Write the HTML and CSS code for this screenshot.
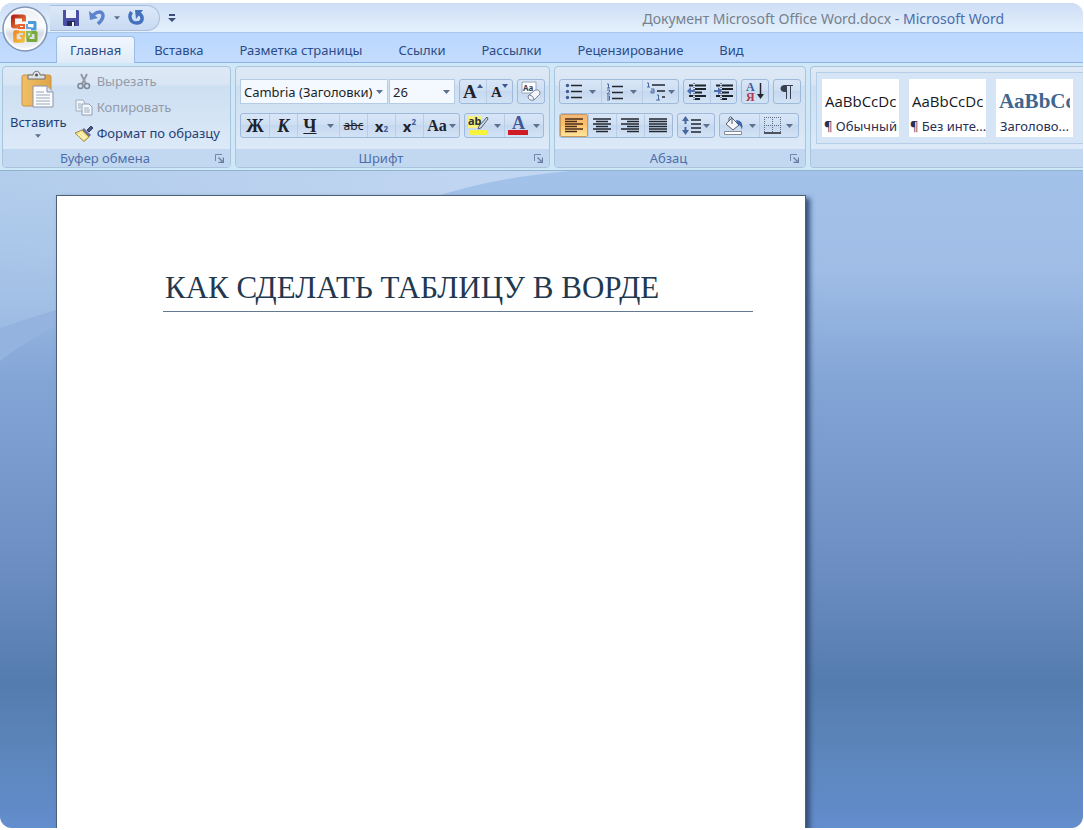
FILE: index.html
```html
<!DOCTYPE html>
<html lang="ru">
<head>
<meta charset="utf-8">
<title>Документ Microsoft Office Word.docx - Microsoft Word</title>
<link rel="stylesheet" href="styles.css">
</head>
<body>
<svg width="0" height="0" class="defs" aria-hidden="true">
  <defs>
    <linearGradient id="lgOrb" x1="0" y1="0" x2="0" y2="1"><stop offset="0" stop-color="#e9edf3"/><stop offset=".45" stop-color="#fdfdfe"/><stop offset=".6" stop-color="#d5dbe5"/><stop offset="1" stop-color="#f8fafc"/></linearGradient>
    <linearGradient id="lgRed" x1="0" y1="0" x2="1" y2="1"><stop offset="0" stop-color="#b3251a"/><stop offset="1" stop-color="#ee8a3a"/></linearGradient>
    <linearGradient id="lgYel" x1="0" y1="0" x2="1" y2="1"><stop offset="0" stop-color="#f08a24"/><stop offset="1" stop-color="#f4bf3a"/></linearGradient>
    <linearGradient id="lgClip" x1="0" y1="0" x2="1" y2="0"><stop offset="0" stop-color="#f0c068"/><stop offset="1" stop-color="#dfa545"/></linearGradient>
    <symbol id="arrow" viewBox="0 0 7 4"><path d="M0 0h7L3.500 4z" fill="#5d7090"/></symbol>
    <symbol id="launch" viewBox="0 0 9 9"><path d="M.5 7V.5H7" fill="none" stroke="#7088ab"/><path d="M3.500 8.500h5v-5M3.500 3.500l4 4" fill="none" stroke="#667d9f" stroke-width="1.300"/></symbol>
  </defs>
</svg>

<div class="window">
  <header class="titlebar">
    <div class="quick">
      <button aria-label="Сохранить"><svg width="18" height="18" viewBox="0 0 18 18"><path d="M1 1h15l1 1v15H2l-1-1z" fill="#4a4fa6"/><path d="M4 1h10v8H4z" fill="#edf2fb"/><path d="M5 12h8v5H5z" fill="#23285f"/><path d="M10 13h2v4h-2z" fill="#f4f6fc"/></svg></button>
      <button aria-label="Отменить"><svg width="17" height="17" viewBox="0 0 17 17"><path d="M4 6.500C7 2.500 14 1.500 14 6.500c0 4-2 5.500-5 8.500" fill="none" stroke="#5c83cb" stroke-width="3.500"/><path d="M0 2l1 9 8-2z" fill="#5c83cb"/></svg></button>
      <button class="tiny" aria-label="Список отмены"><svg width="6" height="4"><use href="#arrow"/></svg></button>
      <button aria-label="Повторить"><svg width="17" height="17" viewBox="0 0 17 17"><path d="M3.500 3C.5 7 2 14 8.500 14S16 7.500 11 4.500" fill="none" stroke="#4371bd" stroke-width="3.500"/><path d="M7 1h8l-7 9z" fill="#4371bd"/></svg></button>
    </div>
    <button class="customize" aria-label="Настройка панели быстрого доступа"><svg width="8" height="8" viewBox="0 0 8 8"><path d="M1 0h6v2H1zM0 4h8L4 8z" fill="#3c4f7a"/></svg></button>
    <h1 class="title"><span class="doc-name">Документ Microsoft Office Word.docx</span> - <span class="app-name">Microsoft Word</span></h1>
  </header>
  <button class="orb" aria-label="Кнопка Office">
    <svg width="46" height="46" viewBox="0 0 46 46">
      <circle cx="23" cy="23" r="22" fill="url(#lgOrb)" stroke="#8296b5" stroke-width="1.500"/>
      <circle cx="23" cy="23" r="20" fill="none" stroke="#fff" stroke-width="1.500" opacity=".8"/>
      <g fill="none" stroke-linejoin="round">
        <path d="M17 20.500h-5q-1 0-1-1v-8q0-1 1-1h9q1 0 1 1v4" stroke="url(#lgRed)" stroke-width="4"/>
        <path d="M26 16.500h7V23h-4" stroke="#4d9ada" stroke-width="3"/>
        <path d="M17 26h-4v9h8v-4" stroke="url(#lgYel)" stroke-width="3.500"/>
        <path d="M29 26.500h5v8h-8v-4" stroke="#79a93b" stroke-width="3"/>
      </g>
      <g fill="none" stroke-width="2"><path d="M17 22v-3h5v3z" stroke="#e8642c"/><path d="M25 18v4h4" stroke="#62a8e2"/><path d="M17 26h5v4h-4" stroke="#f3ae35"/><path d="M25 31v-5h4v4z" stroke="#8dbb52"/></g>
    </svg>
  </button>

  <nav class="tabs">
    <a href="#home" class="active" aria-current="page">Главная</a>
    <a href="#insert">Вставка</a>
    <a href="#layout">Разметка страницы</a>
    <a href="#refs">Ссылки</a>
    <a href="#mail">Рассылки</a>
    <a href="#review">Рецензирование</a>
    <a href="#view">Вид</a>
  </nav>

  <div class="ribbon" id="home">
    <section class="group">
      <div class="group-body clipboard">
        <button class="paste">
          <svg width="34" height="38" viewBox="0 0 34 38"><rect x="1" y="4" width="29" height="31" rx="2" fill="url(#lgClip)" stroke="#c59346"/><path d="M7 8V4h5c0-5 7-5 7 0h5v4z" fill="#dfe3e8" stroke="#70706f"/><circle cx="15.500" cy="4" r="1.500" fill="#555"/><path d="M12 15h14l6 6v15H12z" fill="#fbfcff" stroke="#8793a8"/><path d="M26 15v6h6" fill="#dbe3ef" stroke="#8793a8"/><path d="M15 21h8M15 24h14M15 27h14M15 30h14M15 33h14" stroke="#9ba6b8"/></svg>
          <span>Вставить</span>
          <svg width="6" height="4"><use href="#arrow"/></svg>
        </button>
        <div class="clip-list">
          <button disabled><svg width="18" height="17" viewBox="0 0 18 17"><path d="M6 1l5 10M12 1L7 11" stroke="#949ba6" stroke-width="2" fill="none"/><circle cx="5.500" cy="13" r="2.500" fill="none" stroke="#7f8793" stroke-width="1.500"/><circle cx="12" cy="13" r="2.500" fill="none" stroke="#7f8793" stroke-width="1.500"/></svg>Вырезать</button>
          <button disabled><svg width="18" height="17" viewBox="0 0 18 17"><path d="M1 1h7l2 3v8H1z" fill="#eef3fa" stroke="#a1adbf"/><path d="M7 5h7l3 3v8H7z" fill="#f4f7fc" stroke="#8f9db3"/><path d="M3 5h3M3 7h3M3 9h3M9 9h5M9 11h6M9 13h6" stroke="#9eabbf"/></svg>Копировать</button>
          <button><svg width="18" height="17" viewBox="0 0 18 17"><path d="M12 5l4-4 2 2-4 4z" fill="#4c5580" stroke="#3b4268"/><path d="M9 3l7 7-2 2-7-7z" fill="#6c70a0"/><path d="M7 5l7 7-5 4.500L0 8z" fill="#f2df84" stroke="#a08a3f"/><path d="M3 9l6 5M5 7l6 6" stroke="#fff8c8" stroke-width="1.500"/></svg>Формат по образцу</button>
        </div>
      </div>
      <footer class="caption"><span>Буфер обмена</span><button aria-label="Параметры буфера обмена"><svg width="9" height="9"><use href="#launch"/></svg></button></footer>
    </section>

    <section class="group">
      <div class="group-body">
        <div class="row">
          <div class="combos">
            <label class="combo wide"><select aria-label="Шрифт"><option>Cambria (Заголовки)</option></select><svg width="7" height="4"><use href="#arrow"/></svg></label>
            <label class="combo"><select aria-label="Размер шрифта"><option>26</option></select><svg width="7" height="4"><use href="#arrow"/></svg></label>
          </div>
          <div class="set">
            <button class="sm serif" aria-label="Увеличить размер"><span class="big">A</span><svg class="mark" width="6" height="4" viewBox="0 0 6 4"><path d="M0 4h6L3 0z" fill="#3b5990"/></svg></button>
            <button class="sm serif" aria-label="Уменьшить размер"><span>A</span><svg class="mark" width="6" height="4" viewBox="0 0 6 4"><path d="M0 0h6L3 4z" fill="#3b5990"/></svg></button>
          </div>
          <div class="set">
            <button class="sm" aria-label="Очистить формат"><svg width="20" height="21" viewBox="0 0 20 21"><path d="M1 1h14v11H1z" fill="#fff" stroke="#9aa6bb"/><text x="2" y="10" class="ico-text">Aa</text><path d="M7 15l7-6q5-1 5 4l-6 6q-6 1-6-4z" fill="#f3f5f9" stroke="#77849b"/><path d="M7 15q1-2 4 0 2 2 2 4" fill="none" stroke="#77849b"/></svg></button>
          </div>
        </div>
        <div class="row">
          <div class="set">
            <button class="md serif" aria-label="Полужирный"><b>Ж</b></button>
            <button class="md serif" aria-label="Курсив"><i>К</i></button>
            <button class="lg serif" aria-label="Подчеркнутый"><u>Ч</u><svg width="7" height="4"><use href="#arrow"/></svg></button>
            <button class="md strike" aria-label="Зачеркнутый"><s>abc</s></button>
            <button class="md script" aria-label="Подстрочный знак">x<sub>2</sub></button>
            <button class="md script" aria-label="Надстрочный знак">x<sup>2</sup></button>
            <button class="reg case" aria-label="Регистр"><span>Aa</span><svg width="7" height="4"><use href="#arrow"/></svg></button>
          </div>
          <div class="set">
            <button class="half" aria-label="Цвет выделения"><svg width="21" height="21" viewBox="0 0 21 21"><path d="M0 1h13v12H0z" fill="#f6f27a"/><text x="0" y="10" class="ico-ab">ab</text><path d="M19 2l1 2-7 9-3 1 1-3z" fill="#cfd6e2" stroke="#56617a"/><path d="M1 15h18v5H1z" fill="#f7f23b"/></svg><svg width="7" height="4"><use href="#arrow"/></svg></button>
            <button class="half" aria-label="Цвет текста"><svg width="20" height="21" viewBox="0 0 20 21"><text x="4" y="14" class="ico-a">A</text><path d="M0 15h20v5H0z" fill="#cf1b26"/></svg><svg width="7" height="4"><use href="#arrow"/></svg></button>
          </div>
        </div>
      </div>
      <footer class="caption"><span>Шрифт</span><button aria-label="Параметры шрифта"><svg width="9" height="9"><use href="#launch"/></svg></button></footer>
    </section>

    <section class="group">
      <div class="group-body">
        <div class="row">
          <div class="set">
            <button class="list" aria-label="Маркеры"><svg width="17" height="17" viewBox="0 0 17 17"><g fill="#3f5c94"><circle cx="2.500" cy="2.500" r="1.700"/><circle cx="2.500" cy="8.500" r="1.700"/><circle cx="2.500" cy="14.500" r="1.700"/></g><path d="M6 2.500h11M6 8.500h11M6 14.500h11" stroke="#22262f" stroke-width="1.500"/></svg><svg width="7" height="4"><use href="#arrow"/></svg></button>
            <button class="list" aria-label="Нумерация"><svg width="17" height="18" viewBox="0 0 17 18"><path d="M1 1h1.500v4M1 5h3M1 7h2.500v2L1 11h3M1 13h2.500v4H1M1 15h2" fill="none" stroke="#4867a0"/><path d="M6 3.500h11M6 9.500h11M6 15.500h11" stroke="#22262f" stroke-width="1.500"/></svg><svg width="7" height="4"><use href="#arrow"/></svg></button>
            <button class="reg" aria-label="Многоуровневый список"><svg width="20" height="19" viewBox="0 0 20 19"><path d="M1 1h1.500v4M1 5h3M5 7h3v4H5V9h3M11 13h1.500v5M10 18h4" fill="none" stroke="#4867a0"/><path d="M6 3h13M11 9h8M16 15h3" stroke="#22262f" stroke-width="1.500"/></svg><svg width="7" height="4"><use href="#arrow"/></svg></button>
          </div>
          <div class="set">
            <button class="sm" aria-label="Уменьшить отступ"><svg width="19" height="18" viewBox="0 0 19 18"><path d="M2 2.500h4M8 2.500h11M8 6h11M8 9.500h7M2 13h4M8 13h11M8 16h5" stroke="#1e222b" stroke-width="2"/><path d="M7 0v18" stroke="#1e222b" stroke-dasharray="1 1"/><path d="M0 8l4-4v3h4v2H4v3z" fill="#4e70b2"/></svg></button>
            <button class="sm" aria-label="Увеличить отступ"><svg width="19" height="18" viewBox="0 0 19 18"><path d="M2 2.500h4M8 2.500h11M8 6h11M8 9.500h7M2 13h4M8 13h11M8 16h5" stroke="#1e222b" stroke-width="2"/><path d="M7 0v18" stroke="#1e222b" stroke-dasharray="1 1"/><path d="M8 8L4 4v3H0v2h4v3z" fill="#4e70b2"/></svg></button>
          </div>
          <div class="set">
            <button class="sm" aria-label="Сортировка"><span class="sort"><span class="blue">А</span><span class="red">Я</span></span><svg width="7" height="17" viewBox="0 0 7 17"><path d="M3.500 0v13" stroke="#22262f" stroke-width="1.500"/><path d="M0 11h7l-3.500 5z" fill="#22262f"/></svg></button>
          </div>
          <div class="set">
            <button class="sm" aria-label="Отобразить все знаки"><svg width="13" height="16" viewBox="0 0 13 16"><path d="M13 1H5C-1 1-1 8 5 8h1v7h1V2h3v13h1V2h2z" fill="#39404f"/></svg></button>
          </div>
        </div>
        <div class="row">
          <div class="set">
            <button class="md pressed" aria-label="По левому краю" aria-pressed="true"><svg width="18" height="15" viewBox="0 0 18 15"><path d="M0 1h18M0 3.500h12M0 6h18M0 8.500h12M0 11h18M0 13.500h12" stroke="#4a2c1c" stroke-width="1.500"/></svg></button>
            <button class="md" aria-label="По центру"><svg width="18" height="15" viewBox="0 0 18 15"><path d="M0 1h18M3 3.500h12M0 6h18M3 8.500h12M0 11h18M3 13.500h12" stroke="#22262f" stroke-width="1.500"/></svg></button>
            <button class="md" aria-label="По правому краю"><svg width="18" height="15" viewBox="0 0 18 15"><path d="M0 1h18M6 3.500h12M0 6h18M6 8.500h12M0 11h18M6 13.500h12" stroke="#22262f" stroke-width="1.500"/></svg></button>
            <button class="md" aria-label="По ширине"><svg width="18" height="15" viewBox="0 0 18 15"><path d="M0 1h18M0 3.500h18M0 6h18M0 8.500h18M0 11h18M0 13.500h18" stroke="#22262f" stroke-width="1.500"/></svg></button>
          </div>
          <div class="set">
            <button class="reg" aria-label="Междустрочный интервал"><svg width="19" height="19" viewBox="0 0 19 19"><path d="M3.500 3v5M3.500 11v5" stroke="#4867a0" stroke-width="2"/><path d="M0 5l3.500-5L7 5zM0 14l3.500 5L7 14z" fill="#4867a0"/><path d="M9 4h10M9 8h10M9 12h10M9 16h10" stroke="#22262f" stroke-width="1.500"/></svg><svg width="7" height="4"><use href="#arrow"/></svg></button>
          </div>
          <div class="set">
            <button class="half" aria-label="Заливка"><svg width="21" height="20" viewBox="0 0 21 20"><path d="M3 8l6-6 7 7-6 5z" fill="#f5f7fb" stroke="#555f73"/><path d="M9 8V2Q8-1 6 2v3" fill="none" stroke="#555f73"/><path d="M13 4q8 0 6 10-1-5-5-6z" fill="#3f64a8"/><path d="M1.500 15.500h17v3h-17z" fill="#fff" stroke="#838a98"/></svg><svg width="7" height="4"><use href="#arrow"/></svg></button>
            <button class="half" aria-label="Границы"><svg width="17" height="17" viewBox="0 0 17 17"><path d="M0 .5h17M0 8.500h17M.5 0v15M8.500 0v15M16.500 0v15" stroke="#5c6a82" stroke-dasharray="1 1"/><path d="M0 16h17" stroke="#22262f" stroke-width="1.500"/></svg><svg width="7" height="4"><use href="#arrow"/></svg></button>
          </div>
        </div>
      </div>
      <footer class="caption"><span>Абзац</span><button aria-label="Параметры абзаца"><svg width="9" height="9"><use href="#launch"/></svg></button></footer>
    </section>

    <section class="group styles">
      <div class="gallery">
        <button class="style"><span class="sample">AaBbCcDc</span><span class="name">¶ Обычный</span></button>
        <button class="style"><span class="sample">AaBbCcDc</span><span class="name">¶ Без инте...</span></button>
        <button class="style"><span class="sample heading">AaBbCc</span><span class="name">Заголово...</span></button>
      </div>
      <footer class="caption"></footer>
    </section>
  </div>

  <main class="workspace">
    <svg class="swoosh" viewBox="0 0 1084 657" width="1084" height="657" aria-hidden="true">
      <defs>
        <linearGradient id="lgA" x1="0" y1="0" x2="1" y2="0"><stop offset="0" stop-color="#b3cdec"/><stop offset="1" stop-color="#c2d7f2"/></linearGradient>
        <linearGradient id="lgB" x1="0" y1="0" x2="0" y2="1"><stop offset="0" stop-color="#a5c3e8" stop-opacity="0"/><stop offset="1" stop-color="#9dbce3"/></linearGradient>
      </defs>
      <path d="M0 0H570Q500 6 444 23Q200 90 56 139Q20 150 0 157z" fill="url(#lgA)"/>
      <path d="M0 0H56V139Q20 150 0 157z" fill="url(#lgB)"/>
      <path d="M0 157Q20 150 56 139V155Q20 174 0 190z" fill="#94b4df"/>
    </svg>
    <article class="page">
      <h2>КАК СДЕЛАТЬ ТАБЛИЦУ В ВОРДЕ</h2>
    </article>
  </main>
</div>
</body>
</html>
```
FILE: styles.css
```css
* { box-sizing: border-box; }

body {
  margin: 0;
  min-height: 100vh;
  display: flex;
  background: #fff;
  font-family: "Noto Sans", "Open Sans", sans-serif;
  font-size: 13px;
  line-height: 18px;
  color: #1f3f77;
}

.defs { position: absolute; }

button {
  display: flex;
  align-items: center;
  justify-content: center;
  padding: 0;
  border: 0;
  background: none;
  font: inherit;
  color: inherit;
}

svg { display: block; flex: none; overflow: visible; }

.window {
  position: relative;
  flex: 1;
  min-width: 0;
  margin: 3px 1px 2px 0;
  display: flex;
  flex-direction: column;
  border-radius: 12px;
  overflow: hidden;
  background: #bfdbff;
}

/* Title bar */
.titlebar {
  display: flex;
  align-items: center;
  height: 30px;
  padding-left: 50px;
  background: linear-gradient(#cdddf5, #d9e7f9 50%, #e4f1fc);
  border-bottom: 1px solid #a9c8e8;
}

.quick {
  display: flex;
  align-items: center;
  gap: 9px;
  height: 26px;
  padding: 0 14px 0 12px;
  border: 1px solid #a9bedb;
  border-left: 0;
  border-radius: 0 13px 13px 0;
  background: linear-gradient(#dce8f8, #c8daf2);
}

.quick .tiny { margin: 0 -1px; }
.customize { margin-left: 8px; }

.title {
  flex: 1;
  margin: 0;
  padding: 2px 79px 0 0;
  text-align: right;
  font-size: 14px;
  font-weight: 400;
  line-height: 20px;
  white-space: pre;
  color: #5f6f86;
}

.doc-name { color: #75818f; }
.app-name { color: #4a6ea9; }

.orb {
  position: absolute;
  left: 2px;
  top: 3px;
}

/* Tabs */
.tabs {
  display: flex;
  align-items: flex-end;
  height: 30px;
  padding-left: 56px;
  border-bottom: 1px solid #8db2e3;
  background: linear-gradient(#bbd7fd, #c3dcff);
}

.tabs a {
  padding: 3px 18px;
  color: #2b4c86;
  text-decoration: none;
  white-space: nowrap;
}

.tabs .active {
  padding: 4px 13px;
  margin-right: 1px;
  margin-bottom: -1px;
  border: 1px solid #9bbbe3;
  border-bottom: 0;
  border-radius: 4px 4px 0 0;
  background: linear-gradient(#f1f7fe, #dfebf8);
}

/* Ribbon */
.ribbon {
  display: flex;
  gap: 4px;
  padding: 3px 0 2px 2px;
  background: #cfe8f8;
  border-bottom: 1px solid #8fb3cf;
}

.group {
  flex: none;
  display: flex;
  flex-direction: column;
  border: 1px solid #aac4de;
  border-radius: 4px;
  overflow: hidden;
  background: linear-gradient(#dee9f6 0, #d8e5f4 18px, #cddff2 19px, #dce9f8 82px);
}

.group-body {
  display: flex;
  flex-direction: column;
  gap: 9px;
  height: 82px;
  padding: 12px 4px 0;
}

.caption {
  display: flex;
  align-items: center;
  height: 18px;
  padding: 0 6px 0 0;
  background: #c2d8f0;
  color: #4e6eaa;
}

.caption span { flex: 1; padding-right: 8px; text-align: center; }

.clipboard {
  flex-direction: row;
  gap: 8px;
  padding: 4px 10px 0 7px;
}

.paste {
  flex-direction: column;
  justify-content: flex-start;
}

.paste span { margin: 4px 0 3px; }

.clip-list {
  display: flex;
  flex-direction: column;
  gap: 8px;
  padding-top: 1px;
}

.clip-list button {
  gap: 4px;
  justify-content: flex-start;
  white-space: nowrap;
}

.clip-list button:disabled { color: #929ba9; }

.row { display: flex; gap: 4px; height: 25px; }

.combos { display: flex; gap: 1px; }

.combo {
  display: grid;
  align-items: center;
  width: 66px;
  border: 1px solid #b5cbe6;
  background: #f4f9ff;
}

.combo.wide { width: 148px; }
.combo select, .combo svg { grid-area: 1 / 1; }
.combo svg { justify-self: end; margin-right: 4px; pointer-events: none; }

.combo select {
  appearance: none;
  width: 100%;
  height: 22px;
  padding: 0 0 0 3px;
  border: 0;
  background: none;
  font: inherit;
  color: #1c1f26;
}

.set {
  display: flex;
  border: 1px solid #9fb9da;
  border-radius: 3px;
  background: linear-gradient(#d8e6f7 0, #cfdff3 45%, #c6d8ef 50%, #d3e3f6);
}

.set button { gap: 5px; color: #1e222b; }
.set button + button { border-left: 1px solid #b9cde7; }

.sm { width: 26px; }
.md { width: 28px; }
.reg { width: 36px; }
.set .reg { gap: 2px; }
.lg { width: 42px; }
.set .lg { gap: 10px; }
.half { width: 39px; }
.list { width: 41px; }
.set .list { gap: 7px; }

.serif { font-family: "Liberation Serif", serif; font-size: 18px; font-weight: 700; }
.set .sm.serif { gap: 0; font-size: 15px; }
.sm.serif .big { font-size: 19px; }
.mark { align-self: flex-start; margin-top: 4px; }
.strike { font-size: 12px; }
.script { font-size: 15px; font-weight: 700; }
.script sub, .script sup { font-size: 8px; line-height: 8px; color: #3d5fa3; }
.script sub { align-self: flex-end; margin-bottom: 4px; }
.script sup { align-self: flex-start; margin-top: 4px; }
.set .script { gap: 0; }
.case { font-family: "Liberation Serif", serif; font-size: 16px; font-weight: 700; }

.set .pressed {
  border: 1px solid #c79a5c;
  border-radius: 2px;
  background: linear-gradient(#f3b878, #fcc068 45%, #ffe59b);
}

.sort {
  display: flex;
  flex-direction: column;
  font: 700 12px/10px "Liberation Serif", serif;
}

.set .sm:has(.sort) { gap: 2px; }

.ico-text { font: 700 8px "Noto Sans", sans-serif; fill: #3a4256; }
.ico-ab { font: 700 11px "Noto Sans", sans-serif; fill: #2a3040; }
.ico-a { font: 700 18px "Liberation Serif", serif; fill: #3d5896; }
.blue { color: #3f5f9f; }
.red { color: #b0364a; }

/* Styles gallery */
.styles {
  flex: 1;
  min-width: 0;
  border-right: 0;
  border-radius: 4px 0 0 4px;
}

.gallery {
  display: flex;
  gap: 10px;
  height: 72px;
  margin: 5px 0 5px 5px;
  padding: 6px 5px;
  border: 1px solid #b7cee8;
  border-right: 0;
  background: #d6e5f6;
}

.style {
  flex: none;
  flex-direction: column;
  align-items: stretch;
  width: 77px;
  height: 58px;
  padding: 3px 1px 0;
  background: #fff;
  color: #2a2f55;
}

.sample {
  margin: 0 2px;
  height: 32px;
  overflow: hidden;
  font-family: "Open Sans", sans-serif;
  font-size: 15px;
  line-height: 32px;
  text-align: left;
  white-space: nowrap;
  color: #16181d;
}

.sample.heading {
  font-family: "Liberation Serif", serif;
  font-size: 21px;
  font-weight: 700;
  color: #3f6690;
}

.style .name { text-align: center; white-space: nowrap; }

/* Document area */
.workspace {
  position: relative;
  flex: 1;
  display: flex;
  padding: 24px 277px 0 56px;
  overflow: hidden;
  background: linear-gradient(#a3c2ea 0, #9fbde6 15%, #83a5d6 32%, #6a8cc0 62%, #557caf 78%, #5c86bc 89%, #638dcc 100%);
}

.swoosh { position: absolute; left: 0; top: 0; }

.page {
  position: relative;
  flex: 1;
  min-height: 400px;
  padding: 70px 52px 0 106px;
  border: 1px solid #4d6078;
  border-bottom: 0;
  background: #fff;
  box-shadow: 4px 3px 5px #35507a;
}

.page h2 {
  margin: 0;
  padding: 0 0 1px 2px;
  border-bottom: 1px solid #64788f;
  font-family: "Liberation Serif", serif;
  font-size: 31px;
  font-weight: 400;
  line-height: 44px;
  white-space: nowrap;
  color: #22384f;
}
```
